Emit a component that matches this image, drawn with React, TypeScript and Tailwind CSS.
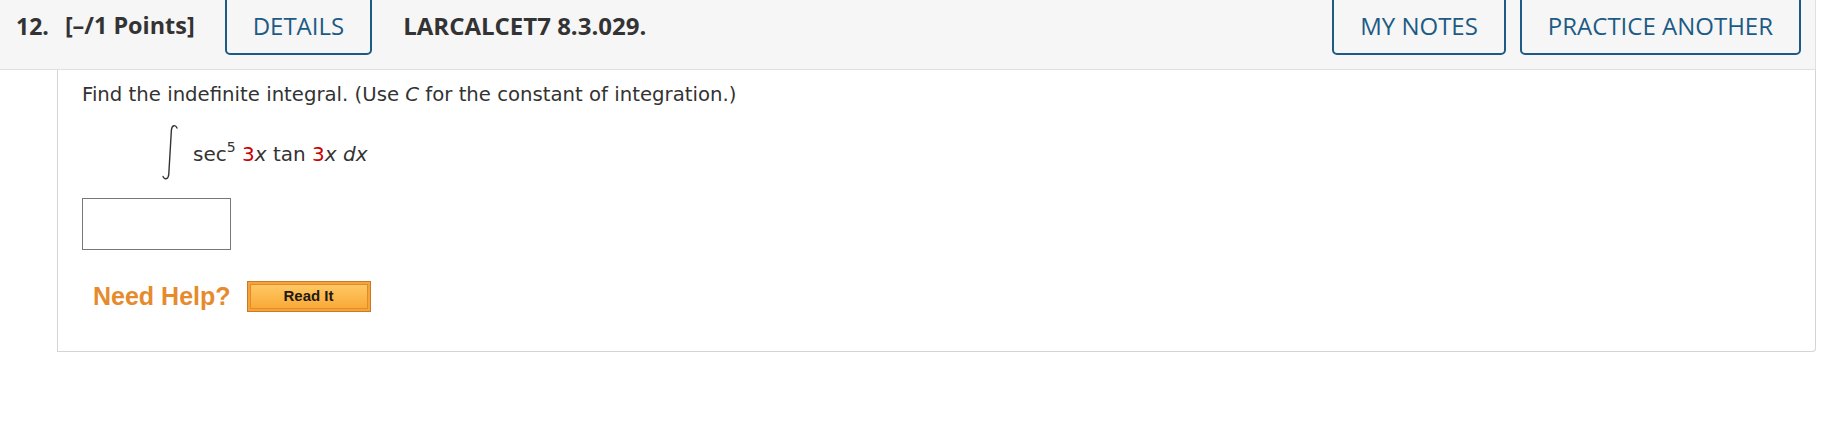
import React from "react";

function OutlineButton({ label }: { label: string }) {
  return (
    <button className="h-[64px] -mt-[6px] pt-[6px] px-[26px] border-2 border-[#1d5b85] rounded-[5px] text-[24px] text-[#1d5b85] bg-transparent leading-none font-['Open_Sans',sans-serif]">
      {label}
    </button>
  );
}

function Integral() {
  return (
    <svg width="16" height="57" viewBox="0 0 16 57" className="shrink-0">
      <path
        d="M15 4 C13.5 0.5, 10 0.8, 9.4 6 L6.8 50 C6.4 55.5, 2.8 56.2, 1 52.5"
        fill="none"
        stroke="#333"
        strokeWidth="1.4"
        strokeLinecap="round"
      />
    </svg>
  );
}

export default function App() {
  return (
    <div className="w-[1833px] h-[427px] bg-white overflow-hidden">
      <div className="w-[1816px]">
        {/* header bar */}
        <div className="h-[70px] bg-[#f6f6f6] border-b border-r border-[#e0e0e0] pl-[16px] pr-[14px] font-['Open_Sans',sans-serif]">
          <div className="flex items-center h-[52px]">
            <span className="text-[23px] font-bold text-[#333]">12.</span>
            <span className="text-[23.4px] font-bold text-[#333] ml-[16px]">[–/1 Points]</span>
            <div className="ml-[30px]">
              <OutlineButton label="DETAILS" />
            </div>
            <span className="text-[24px] font-bold text-[#333] ml-[31px]">LARCALCET7 8.3.029.</span>
            <div className="ml-auto flex gap-[14px]">
              <OutlineButton label="MY NOTES" />
              <OutlineButton label="PRACTICE ANOTHER" />
            </div>
          </div>
        </div>

        {/* question body */}
        <div className="ml-[57px] h-[282px] border-l border-r border-b border-[#d4d4d4] rounded-br-[4px] pl-[24px] pt-[12px] font-['DejaVu_Sans',Verdana,sans-serif] text-[#333]">
          <p className="text-[19.7px] leading-[26px] whitespace-nowrap">
            Find the indefinite integral. (Use <i>C</i> for the constant of integration.)
          </p>

          <div className="flex items-start mt-[16px] ml-[80px]">
            <Integral />
            <div className="ml-[15px] mt-[17px] text-[20px] leading-[26px] whitespace-nowrap">
              sec<sup className="text-[14px] relative -top-[9px] align-baseline">5</sup>{" "}
              <span className="text-[#cc0000]">3</span>
              <i>x</i> tan <span className="text-[#cc0000]">3</span>
              <i>x</i> <i>dx</i>
            </div>
          </div>

          <div className="mt-[17px] w-[149px] h-[52px] border border-[#777] bg-white" />

          <div className="flex items-center mt-[31px] ml-[11px] font-['Liberation_Sans',Arial,sans-serif]">
            <span className="text-[25px] leading-[31px] font-bold text-[#e68a2e]">Need Help?</span>
            <button className="ml-[16px] w-[124px] h-[31px] border border-[#c77a27] bg-[#f7a33a] p-[2px]">
              <div className="w-full h-full border border-[#e08b2c] bg-gradient-to-b from-[#ffc862] to-[#f9a937] flex items-center justify-center text-[15px] font-bold text-[#1f1a12]">
                Read It
              </div>
            </button>
          </div>
        </div>
      </div>
    </div>
  );
}
